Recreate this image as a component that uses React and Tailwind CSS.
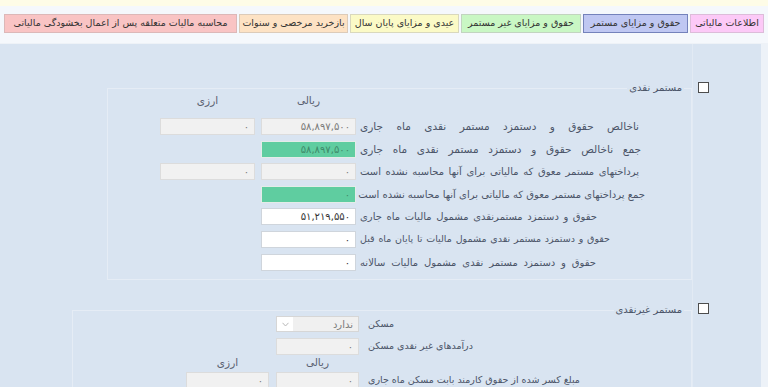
const tabs = [
  { t: 'اطلاعات مالیاتی', w: 'w-[74px]', c: 'bg-[#fcc9f7] border-[#dcbcd9]' },
  { t: 'حقوق و مزایای مستمر', w: 'w-[105px]', c: 'bg-[#bfc7f2] border-[#7482bb]' },
  { t: 'حقوق و مزایای غیر مستمر', w: 'w-[120px]', c: 'bg-[#c9f7c4] border-[#c2d4c0]' },
  { t: 'عیدی و مزایای پایان سال', w: 'w-[109px]', c: 'bg-[#fbfac6] border-[#d9d8bd]' },
  { t: 'بازخرید مرخصی و سنوات', w: 'w-[109px]', c: 'bg-[#fde2c4] border-[#dccbb9]' },
  { t: 'محاسبه مالیات متعلقه پس از اعمال بخشودگی مالیاتی', w: 'w-[233px]', c: 'bg-[#f9c4c4] border-[#dcb8b8]' },
];

// labels are stretched to fixed widths in the original form
const cashRows = [
  { label: 'ناخالص حقوق و دستمزد مستمر نقدی ماه جاری', rial: '۵۸,۸۹۷,۵۰۰', kind: 'gray', arzi: true, mt: 'mt-[10px]', lw: 'w-[279px] text-[10.5px]' },
  { label: 'جمع ناخالص حقوق و دستمزد مستمر نقدی ماه جاری', rial: '۵۸,۸۹۷,۵۰۰', kind: 'green', arzi: false, mt: 'mt-[6px]', lw: 'w-[281px] text-[10.5px]' },
  { label: 'پرداختهای مستمر معوق که مالیاتی برای آنها محاسبه نشده است', rial: '۰', kind: 'gray', arzi: true, mt: 'mt-[5px]', lw: 'w-[279px] text-[10px]' },
  { label: 'جمع پرداختهای مستمر معوق که مالیاتی برای آنها محاسبه نشده است', rial: '۰', kind: 'green', arzi: false, mt: 'mt-[6px]', lw: 'w-[285px] text-[10px]' },
  { label: 'حقوق و دستمزد مستمرنقدی مشمول مالیات ماه جاری', rial: '۵۱,۲۱۹,۵۵۰', kind: 'white', arzi: false, mt: 'mt-[5px]', lw: 'w-[237px] text-[10px]' },
  { label: 'حقوق و دستمزد مستمر نقدی مشمول مالیات تا پایان ماه قبل', rial: '۰', kind: 'white', arzi: false, mt: 'mt-[6px]', lw: 'w-[250px] text-[9.5px]' },
  { label: 'حقوق و دستمزد مستمر نقدی مشمول مالیات سالانه', rial: '۰', kind: 'white', arzi: false, mt: 'mt-[6px]', lw: 'w-[236px] text-[10px]' },
];

const boxStyles = {
  gray: 'bg-[#f1f1f1] border-[#dcdcdc] text-[#7a7a7a]',
  green: 'bg-[#5fcda0] border-[#e4ece8] text-[#3f8a6a]',
  white: 'bg-white border-[#cfd5dc] text-[#333]',
};

const Field = ({ value, kind = 'gray', w = 'w-[95px]', className = '' }) => (
  <div className={`${w} h-[17px] shrink-0 border ${boxStyles[kind]} flex items-center pr-[5px] text-[10px] leading-none ${className}`}>
    {value}
  </div>
);

const Legend = ({ children }) => (
  <legend className="mr-[7px] px-[2px] h-[12px] leading-[12px] text-[10px] text-[#4b5468]">{children}</legend>
);

const Checkbox = ({ className = '' }) => (
  <div className={`w-[11px] h-[11px] border border-[#4d4d4d] bg-white ${className}`} />
);

const smallLabelCls = 'text-[9.5px] text-[#4b5468] whitespace-nowrap';

export default function App() {
  return (
    <div dir="rtl" className="w-[768px] h-[387px] overflow-hidden font-['DejaVu_Sans',sans-serif] bg-[#f5f8fc]">
      <div className="h-[6px] bg-[#fefce7]" />
      <div className="h-[38px] flex items-start pt-[8px] pr-[4px] gap-[2px] border-b border-[#eef2f7]">
        {tabs.map((tab) => (
          <div
            key={tab.t}
            className={`${tab.w} ${tab.c} h-[19px] border flex items-center justify-center text-[9.5px] text-[#333] whitespace-nowrap`}
          >
            {tab.t}
          </div>
        ))}
      </div>
      <div className="flex h-[343px] bg-[#d9e4f1]">
        <div className="w-[7px] bg-[#edf2f8]" />
        <div className="w-[69px] border-l border-[#e2eaf4]">
          <Checkbox className="mr-[52px] mt-[38px]" />
          <Checkbox className="mr-[52px] mt-[210px]" />
        </div>
        <div className="w-[692px]">
          <fieldset className="mt-[38px] w-[585px] min-w-0 border border-[#e5ecf5] pb-[8px]">
            <Legend>مستمر نقدی</Legend>
            <div className="flex justify-end pl-[52px] h-[14px] items-center text-[10.5px] text-[#5a6070]">
              <div className="w-[95px] ml-[6px] text-center">ریالی</div>
              <div className="w-[95px] text-center">ارزی</div>
            </div>
            {cashRows.map((r) => (
              <div key={r.label} className={`flex justify-end items-center pl-[52px] ${r.mt}`}>
                <span className={`ml-[4px] shrink-0 ${r.lw} text-[#4b5468] whitespace-nowrap text-justify [text-align-last:justify]`}>
                  {r.label}
                </span>
                <Field value={r.rial} kind={r.kind} className="ml-[6px]" />
                {r.arzi ? <Field value="۰" kind="gray" /> : <div className="w-[95px] shrink-0" />}
              </div>
            ))}
          </fieldset>
          <fieldset className="mt-[24px] w-[620px] min-w-0 border border-[#e5ecf5] pb-[20px]">
            <Legend>مستمر غیرنقدی</Legend>
            <div className="flex justify-end items-center pl-[113px]">
              <span className={`ml-[9px] ${smallLabelCls}`}>مسکن</span>
              <div className="w-[83px] h-[16px] border border-[#d6d6d6] flex ml-[7px]">
                <div className="flex-1 bg-[#f0f0f0] flex items-center pr-[5px] text-[10px] text-[#7a7a7a]">ندارد</div>
                <div className="w-[16px] bg-white flex items-center justify-center">
                  <svg width="7" height="5" viewBox="0 0 7 5">
                    <polyline points="0.5,0.8 3.5,4 6.5,0.8" fill="none" stroke="#b8b8b8" strokeWidth="1" />
                  </svg>
                </div>
              </div>
              <div className="w-[83px] shrink-0" />
            </div>
            <div className="flex justify-end items-center pl-[113px] mt-[6px]">
              <span className={`ml-[9px] ${smallLabelCls}`}>درآمدهای غیر نقدی مسکن</span>
              <Field value="۰" kind="gray" w="w-[83px]" className="ml-[7px]" />
              <div className="w-[83px] shrink-0" />
            </div>
            <div className="flex justify-end pl-[113px] h-[14px] mt-[1px] items-center text-[10.5px] text-[#5a6070]">
              <div className="w-[83px] ml-[7px] text-center">ریالی</div>
              <div className="w-[83px] text-center">ارزی</div>
            </div>
            <div className="flex justify-end items-center pl-[113px] mt-[2px]">
              <span className={`ml-[9px] ${smallLabelCls}`}>مبلغ کسر شده از حقوق کارمند بابت مسکن ماه جاری</span>
              <Field value="۰" kind="gray" w="w-[83px]" className="ml-[7px]" />
              <Field value="۰" kind="gray" w="w-[83px]" />
            </div>
          </fieldset>
        </div>
      </div>
    </div>
  );
}
